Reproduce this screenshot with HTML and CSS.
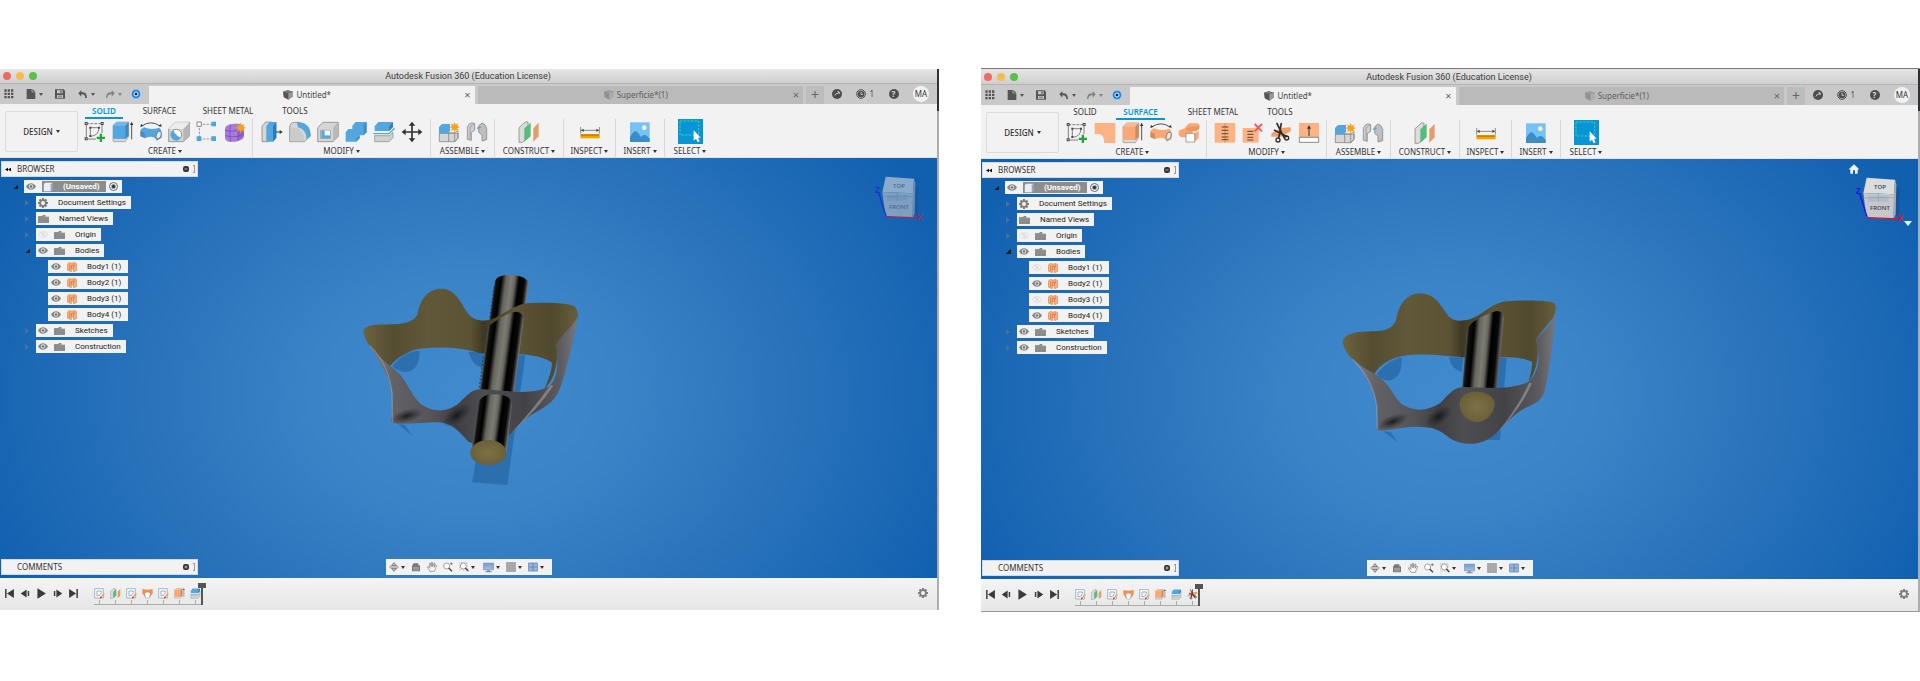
FILE: index.html
```html
<!DOCTYPE html>
<html lang="en">
<head>
<meta charset="utf-8">
<title>Autodesk Fusion 360 (Education License)</title>
<link rel="stylesheet" href="styles.css">
</head>
<body>
<svg class="defs" width="0" height="0" aria-hidden="true">
<defs>
<linearGradient id="rodA" gradientUnits="userSpaceOnUse" x1="471" x2="574" y1="0" y2="0" gradientTransform="skewX(-7.5)"><stop offset="0" stop-color="#555"/><stop offset=".06" stop-color="#111"/><stop offset=".2" stop-color="#000"/><stop offset=".34" stop-color="#66665f"/><stop offset=".5" stop-color="#7c7c74"/><stop offset=".6" stop-color="#66665f"/><stop offset=".72" stop-color="#000"/><stop offset=".88" stop-color="#080808"/><stop offset=".94" stop-color="#333"/><stop offset="1" stop-color="#777"/></linearGradient>
<linearGradient id="rodB" gradientUnits="userSpaceOnUse" x1="457" x2="562" y1="0" y2="0" gradientTransform="skewX(-5)"><stop offset="0" stop-color="#555"/><stop offset=".06" stop-color="#111"/><stop offset=".2" stop-color="#000"/><stop offset=".34" stop-color="#66665f"/><stop offset=".5" stop-color="#7c7c74"/><stop offset=".6" stop-color="#66665f"/><stop offset=".72" stop-color="#000"/><stop offset=".88" stop-color="#080808"/><stop offset="1" stop-color="#666"/></linearGradient>
<linearGradient id="olive" x1="0" x2="1" y1="0" y2="0"><stop offset="0" stop-color="#6c6340"/><stop offset=".14" stop-color="#554d31"/><stop offset=".3" stop-color="#61583a"/><stop offset=".5" stop-color="#5c5335"/><stop offset=".56" stop-color="#3f3923"/><stop offset=".7" stop-color="#5d5436"/><stop offset=".88" stop-color="#51492e"/><stop offset="1" stop-color="#665e3c"/></linearGradient>
<linearGradient id="steel" x1="0" x2="1" y1="0" y2="0"><stop offset="0" stop-color="#7f7f83"/><stop offset=".12" stop-color="#626266"/><stop offset=".3" stop-color="#555559"/><stop offset=".42" stop-color="#3f3f43"/><stop offset=".55" stop-color="#4e4e52"/><stop offset=".75" stop-color="#434347"/><stop offset=".92" stop-color="#5b5b60"/><stop offset="1" stop-color="#78787e"/></linearGradient>
<radialGradient id="cap"><stop offset="0" stop-color="#7d7145"/><stop offset="1" stop-color="#6a6039"/></radialGradient>
<radialGradient id="spot"><stop offset="0" stop-color="#111" stop-opacity=".85"/><stop offset="1" stop-color="#222" stop-opacity="0"/></radialGradient>
<linearGradient id="screen" x1="0" x2="0" y1="0" y2="1"><stop offset="0" stop-color="#6f9cd6"/><stop offset="1" stop-color="#a3c1e8"/></linearGradient>

<symbol id="sketch" viewBox="0 0 66 66"><g fill="none" stroke="#4a4a4a" stroke-width="2"><path d="M7 8H52" stroke-dasharray="9 3"/><path d="M7 12V52M54 12V36M10 54H36"/><path d="M19 20H45M19 20V46M45 20Q44 44 20 46"/></g><g fill="#4a4a4a"><path d="M2 3h9v9H2zM50 3h9v9h-9zM2 49h9v9H2zM16 17h6v6h-6zM42 17h6v6h-6zM16 42h6v6h-6z"/></g><g fill="#f2f2f2"><path d="M5 6h3v3H5zM53 6h3v3h-3zM5 52h3v3H5z"/></g><path d="M47 38h7v9h9v7h-9v9h-7v-9h-9v-7h9z" fill="#22a53f"/></symbol>
<symbol id="extrude" viewBox="0 0 66 66"><path d="M3 55V14L14 3H50V46L40 62H6Q3 62 3 58z" fill="#d9d9d9" stroke="#777" stroke-width="1.5"/><path d="M3 53V15Q3 13 5 11L13 4Q14 3 17 3H50V44L40 54z" fill="currentColor"/><path d="M40 14L50 3V45L40 54z" fill="#000" opacity=".18"/><path d="M3 14L14 3H50L40 14z" fill="#fff" opacity=".2"/><path d="M59 55V9" stroke="#333" stroke-width="2.5"/><path d="M54 12L59 2L64 12z" fill="#333"/></symbol>
<symbol id="revolve" viewBox="0 0 66 66"><path d="M5 15Q33 -4 60 15" fill="none" stroke="#333" stroke-width="2.5"/><path d="M1 18L3 9L11 14zM65 18L63 9L55 14z" fill="#333"/><path d="M1 30Q1 26 5 23L12 19Q33 28 58 20Q65 26 65 36V50L50 59Q46 47 32 47Q22 47 15 52L1 46z" fill="currentColor"/><path d="M15 52L1 46V30L14 35zM48 40L62 28Q65 31 65 38L50 59z" fill="#000" opacity=".16"/><ellipse cx="56" cy="42" rx="7" ry="12" fill="#e8e8e8" stroke="#666" stroke-width="2" transform="rotate(20 56 42)"/></symbol>
<symbol id="hole" viewBox="0 0 66 66"><path d="M2 24L22 4H64V46L46 62H2z" fill="#d5d5d5" stroke="#777" stroke-width="2"/><path d="M46 24L64 5V46L46 62z" fill="#b5b5b5"/><path d="M2 24L22 4H64L46 24z" fill="#ececec"/><circle cx="25" cy="41" r="16" fill="#fff" stroke="#666" stroke-width="2"/><path d="M16 28A16 16 0 1 0 38 50Q24 46 16 28z" fill="#54a6e0"/></symbol>
<symbol id="pattern" viewBox="0 0 66 66"><path d="M10 10H54M10 10V54H54" fill="none" stroke="#666" stroke-width="2" stroke-dasharray="7 4"/><path d="M3 3h13v13H3z" fill="#fff" stroke="#555" stroke-width="2"/><path d="M46 2h14v14H46zM2 46h14v14H2zM46 46h14v14H46z" fill="#4da3e4"/></symbol>
<symbol id="form" viewBox="0 0 66 66"><path d="M3 24Q3 15 14 11L30 8H44Q60 10 60 24V44Q60 52 50 57L36 62H14Q3 60 3 48z" fill="#a77bdc"/><path d="M3 28Q20 34 42 28Q55 24 60 20M4 44Q22 50 42 46Q56 42 60 36M20 10Q14 30 20 62M42 10V60" fill="none" stroke="#6f42ae" stroke-width="2"/><path d="M42 28Q56 25 60 20V46L42 60z" fill="#6f42ae" opacity=".35"/><path d="M50 4l3 9 9-4-4 8 8 3-8 4 4 8-9-4-3 9-3-9-9 4 4-8-8-4 8-3-4-8 9 4z" fill="#f6a31b"/></symbol>
<symbol id="presspull" viewBox="0 0 66 66"><path d="M3 15L14 3H32V52L22 62H3z" fill="#d6d6d6" stroke="#777" stroke-width="2"/><path d="M16 15L26 3H46V50L36 62H16z" fill="#54a6e0"/><path d="M36 15L46 3V50L36 62z" fill="#2b7cbb"/><path d="M44 33H58" stroke="#333" stroke-width="3"/><path d="M56 27L65 33L56 39z" fill="#333"/></symbol>
<symbol id="fillet" viewBox="0 0 66 66"><path d="M2 20Q2 4 18 4H30Q64 10 64 44V46L46 62H2z" fill="#d6d6d6" stroke="#777" stroke-width="2"/><path d="M24 4H32Q64 8 64 40V46L52 54Q54 26 26 18z" fill="#54a6e0"/><path d="M3 61V20Q42 16 46 61z" fill="#cbcbcb"/></symbol>
<symbol id="shell" viewBox="0 0 66 66"><path d="M2 20L18 4H64V46L48 62H2z" fill="#d6d6d6" stroke="#777" stroke-width="2"/><path d="M48 20L64 4V46L48 62z" fill="#b9b9b9"/><path d="M11 28H40V52H11z" fill="#fff" stroke="#777" stroke-width="2"/><path d="M13 29H23L39 43V51H13z" fill="#54a6e0"/><path d="M23 29H39V43H23z" fill="#fff"/></symbol>
<symbol id="combine" viewBox="0 0 66 66"><path d="M2 34L10 24H22V14L32 3H65V34L56 43H44V52L34 62H2z" fill="#54a6e0"/><path d="M56 12L65 3V34L56 43zM34 52L44 43V52L34 62z" fill="#2f86cb" opacity=".7"/></symbol>
<symbol id="split" viewBox="0 0 66 66"><path d="M5 16L16 3H60V18L48 30H5z" fill="#54a6e0"/><path d="M48 16L60 4V18L48 30z" fill="#2f80be"/><path d="M1 38H48L65 22" fill="none" stroke="#54a6e0" stroke-width="4"/><path d="M5 44H50L60 34V50L48 62H5z" fill="#d1d1d1" stroke="#888" stroke-width="2"/></symbol>
<symbol id="move" viewBox="0 0 66 66"><path d="M33 10V56M10 33H56" stroke="#333" stroke-width="5"/><path d="M23 14L33 2L43 14zM23 52L33 64L43 52zM14 23L2 33L14 43zM52 23L64 33L52 43z" fill="#333"/></symbol>
<symbol id="patch" viewBox="0 0 66 66"><path d="M2 3H64V63H30V55Q29 39 15 36H2z" fill="#fbb383"/></symbol>
<symbol id="offset" viewBox="0 0 66 66"><path d="M2 30Q2 24 12 22L22 18V14L34 4H58L64 8V20L54 28H44V46H10Q2 42 2 36z" fill="#f9a873"/><path d="M54 14L64 8V20L54 28zM22 22L36 14H54V28H32z" fill="#d9793a" opacity=".4"/><path d="M50 34L62 26V48L50 60z" fill="#f9a873"/><path d="M24 34H50V60H24z" fill="#fff" stroke="#777" stroke-width="2"/></symbol>
<symbol id="stitch" viewBox="0 0 66 66"><path d="M2 3H64V62H2z" fill="#fbb383"/><path d="M33 3V62" stroke="#c77b46" stroke-width="2"/><path d="M23 15H43M23 25H43M23 35H43M23 45H43M23 53H43" stroke="#5b4636" stroke-width="3"/></symbol>
<symbol id="unstitch" viewBox="0 0 66 66"><path d="M2 18H50V62H2z" fill="#fbb383"/><path d="M16 28H34M16 37H34M16 46H34M16 54H34" stroke="#5b4636" stroke-width="3"/><path d="M38 6L60 28M60 6L38 28" stroke="#f05a60" stroke-width="6"/></symbol>
<symbol id="trim" viewBox="0 0 66 66"><path d="M4 34L34 18L62 16V28L34 44H4z" fill="#f2a06a"/><path d="M20 3L44 50M34 3L26 50M12 24L52 44" stroke="#2f2f2f" stroke-width="5"/><circle cx="24" cy="54" r="6" fill="none" stroke="#2f2f2f" stroke-width="4"/><circle cx="50" cy="48" r="6" fill="none" stroke="#2f2f2f" stroke-width="4"/></symbol>
<symbol id="extend" viewBox="0 0 66 66"><path d="M3 3H63V45H3z" fill="#fbb383"/><path d="M4 46H62V61H4z" fill="#fff" stroke="#555" stroke-width="2"/><path d="M33 42V18" stroke="#333" stroke-width="3"/><path d="M27 20L33 10L39 20z" fill="#333"/></symbol>
<symbol id="component" viewBox="0 0 66 66"><path d="M4 36H60V52L50 62H4z" fill="#d5d5d5" stroke="#777" stroke-width="2"/><path d="M32 36V62M4 36H50L60 28V52L50 62V36" fill="none" stroke="#777" stroke-width="2"/><path d="M3 18L12 9H36V30L30 37H3z" fill="#54a6e0"/><path d="M50 2l3 9 9-4-4 8 8 3-8 4 4 8-9-4-3 9-3-9-9 4 4-8-8-4 8-3-4-8 9 4z" fill="#f6a31b"/></symbol>
<symbol id="joint" viewBox="0 0 66 66"><path d="M4 55V20Q6 8 18 5L26 8V28L16 34V58z" fill="#cfcfcf" stroke="#777" stroke-width="2"/><path d="M62 56V22Q58 8 48 6L38 14V34L48 42V60z" fill="#c0c0c0" stroke="#777" stroke-width="2"/><path d="M33 22L44 18" stroke="#54a6e0" stroke-width="4"/><path d="M12 56V20Q14 12 26 8" fill="none" stroke="#888" stroke-width="2"/></symbol>
<symbol id="plane" viewBox="0 0 66 66"><path d="M3 20L22 3H30V50L14 64H3z" fill="#dcdcdc" stroke="#777" stroke-width="2"/><path d="M19 22L38 5V46L19 62z" fill="#53bd7c"/><path d="M46 22L62 5V46L46 62z" fill="#e89a68"/></symbol>
<symbol id="measure" viewBox="0 0 66 66"><path d="M5 18V38M61 18V38M7 28H59" stroke="#555" stroke-width="2"/><path d="M6 28L14 23V33zM60 28L52 23V33z" fill="#444"/><path d="M4 39H62V52H4z" fill="#f5a300"/><path d="M9 40v5M15 40v5M21 40v5M27 40v5M33 40v5M39 40v5M45 40v5M51 40v5M57 40v5" stroke="#704b00" stroke-width="2"/></symbol>
<symbol id="picture" viewBox="0 0 66 66"><path d="M3 4H62V63H3z" fill="#74c2f7"/><path d="M3 48Q18 22 27 36L36 48Q48 34 62 54V63H3z" fill="#3a8dc8"/><circle cx="46" cy="20" r="7" fill="#fff3b0"/></symbol>
<symbol id="select" viewBox="0 0 75 75"><path d="M0 0H75V75H0z" fill="#0696d7"/><path d="M6 6H62V48H6z" fill="none" stroke="#6bd37a" stroke-width="2.5" stroke-dasharray="7 4"/><path d="M47 34V65L54 59L59 70L65 67L60 56H68z" fill="#fff"/></symbol>

<symbol id="grid" viewBox="0 0 30 30"><path d="M1 1h7v7H1zM11 1h7v7h-7zM21 1h7v7h-7zM1 11h7v7H1zM11 11h7v7h-7zM21 11h7v7h-7zM1 21h7v7H1zM11 21h7v7h-7zM21 21h7v7h-7z"/></symbol>
<symbol id="file" viewBox="0 0 30 30"><path d="M2 0H17V10H28V30H2zM19 0L28 8H19z"/></symbol>
<symbol id="save" viewBox="0 0 30 30"><path fill-rule="evenodd" d="M0 1H26L30 5V29H0zM6 4V13H23V4zM6 18V27H24V18zM16 5h4v6h-4zM9 20h12v2H9zM9 23h12v2H9z"/></symbol>
<symbol id="undo" viewBox="0 0 30 30"><path d="M10 3V10Q26 8 27 26L22 28Q22 15 10 16V23L1 13z"/></symbol>
<symbol id="redo" viewBox="0 0 30 30"><path d="M20 3V10Q4 8 3 26L7 28Q8 15 20 16V23L29 13z"/></symbol>
<symbol id="hub" viewBox="0 0 30 30"><path d="M8 1H22L30 15L22 29H8L0 15z" fill="#78bdf7"/><circle cx="15" cy="15" r="12" fill="#1583ea"/><circle cx="15" cy="15" r="6" fill="#123" stroke="#fff" stroke-width="3"/></symbol>
<symbol id="doc" viewBox="0 0 30 30"><path d="M0 5L14 1L30 5V19L16 29L2 22z" fill="#555"/><path d="M16 10L30 5V19L16 29z" fill="#999"/><path d="M0 5L14 1L30 5L16 10z" fill="#777"/></symbol>
<symbol id="ext" viewBox="0 0 30 30"><circle cx="15" cy="15" r="15"/><path d="M7 22Q10 10 19 12L15 7Q25 5 23 16L20 13Q12 14 7 22z" fill="#ddd"/></symbol>
<symbol id="clock" viewBox="0 0 30 30"><circle cx="15" cy="15" r="13" fill="none" stroke="currentColor" stroke-width="3"/><circle cx="15" cy="15" r="10"/><path d="M15 8V16H21" fill="none" stroke="#ddd" stroke-width="2.5"/></symbol>
<symbol id="eye" viewBox="0 0 30 20"><path d="M0 10C8 -3 22 -3 30 10C22 23 8 23 0 10z" fill="#858585"/><circle cx="15" cy="10" r="6.5" fill="#f2f2f2"/><circle cx="15" cy="10" r="4" fill="#6f6f6f"/></symbol>
<symbol id="eyeoff" viewBox="0 0 30 20"><path d="M1 10C8 -1 22 -1 29 10C22 21 8 21 1 10zM4 1L26 19" fill="none" stroke="#d2d2d2" stroke-width="2"/><circle cx="15" cy="10" r="4" fill="#dadada"/></symbol>
<symbol id="folder" viewBox="0 0 33 24"><path d="M0 3H12L15 0H22V5H33V24H0z" fill="#8c8c8c"/><path d="M0 6H33" stroke="#aaa"/></symbol>
<symbol id="gear" viewBox="0 0 30 30"><g fill="#7d7d7d"><path d="M12 0h6v30h-6z"/><path d="M12 0h6v30h-6z" transform="rotate(45 15 15)"/><path d="M12 0h6v30h-6z" transform="rotate(90 15 15)"/><path d="M12 0h6v30h-6z" transform="rotate(135 15 15)"/><circle cx="15" cy="15" r="11"/></g><circle cx="15" cy="15" r="6" fill="#f2f2f2"/></symbol>
<symbol id="cube" viewBox="0 0 30 30"><path d="M1 6L7 1H29V23L23 29H4Q1 29 1 26z" fill="#e9eef6" stroke="#666" stroke-width="1.5"/><path d="M23 7L29 1V23L23 29z" fill="#9aa3b5"/></symbol>
<symbol id="body" viewBox="0 0 30 30"><path d="M1 6L8 1L15 4L22 1L29 5V25L20 29L18 20H13V29L1 24z" fill="#fbb283" stroke="#d06a30" stroke-width="1.5"/><path d="M8 7V24M13 20V10H19V20M22 5V14" fill="none" stroke="#d06a30" stroke-width="2"/></symbol>
<symbol id="rewind" viewBox="0 0 18 10"><path d="M9 0V10L0 5zM18 0V10L9 5z"/></symbol>
<symbol id="dot" viewBox="0 0 16 16"><rect width="16" height="16" rx="6" fill="#333"/><path d="M4 8H12" stroke="#ddd" stroke-width="2"/></symbol>
<symbol id="dotplus" viewBox="0 0 16 16"><rect width="16" height="16" rx="6" fill="#333"/><path d="M4 8H12M8 4V12" stroke="#ddd" stroke-width="2"/></symbol>
<symbol id="first" viewBox="0 0 30 30"><path d="M3 3H7V27H3zM27 3V27L8 15z"/></symbol>
<symbol id="prev" viewBox="0 0 30 30"><path d="M18 4V26L2 15zM21 8H25V22H21z"/></symbol>
<symbol id="play" viewBox="0 0 30 30"><path d="M4 1L27 15L4 29z"/></symbol>
<symbol id="next" viewBox="0 0 30 30"><path d="M12 4V26L28 15zM5 8H9V22H5z"/></symbol>
<symbol id="last" viewBox="0 0 30 30"><path d="M23 3H27V27H23zM3 3V27L22 15z"/></symbol>
<symbol id="tsketch" viewBox="0 0 33 33"><path d="M2 2H28V30H2z" fill="#fafafa" stroke="#7e9cbc" stroke-width="2"/><path d="M9 9H22V14Q20 24 9 24z" fill="none" stroke="#6f8eb0" stroke-width="2"/><path d="M20 29L31 16" stroke="#f0a02c" stroke-width="4"/><path d="M19 31L22 26" stroke="#e33" stroke-width="4"/></symbol>
<symbol id="tloft" viewBox="0 0 33 33"><path d="M1 3Q16 8 32 3V16L22 30H11L1 16z" fill="#f58b4c"/><path d="M11 30L8 16Q16 8 25 16L22 30z" fill="#fff" stroke="#999" stroke-width="1.5"/></symbol>
<symbol id="orbit" viewBox="0 0 30 30"><path d="M15 1V29" stroke="#666" stroke-width="2"/><ellipse cx="15" cy="15" rx="13" ry="5" fill="none" stroke="#666" stroke-width="2"/><ellipse cx="15" cy="15" rx="6" ry="12" fill="none" stroke="#666" stroke-width="2"/></symbol>
<symbol id="look" viewBox="0 0 30 30"><path d="M3 12L8 4H22V10H27V28H3z" fill="#777"/><path d="M6 16H24M6 20H24M6 24H24" stroke="#bbb" stroke-width="2"/></symbol>
<symbol id="hand" viewBox="0 0 30 30"><path d="M9 28Q5 22 1 15L5 14L9 19L7 5L10 4L13 14V1H16L17 14L21 3L24 4L21 16L26 9L29 11Q25 20 22 28z" fill="#fff" stroke="#666" stroke-width="1.8"/></symbol>
<symbol id="zoom" viewBox="0 0 30 30"><circle cx="11" cy="12" r="9" fill="#fff" stroke="#777" stroke-width="2"/><path d="M17 18L27 28" stroke="#444" stroke-width="4"/><path d="M21 5H29M25 1V9" stroke="#555" stroke-width="2"/></symbol>
<symbol id="zoomw" viewBox="0 0 30 30"><path d="M1 1H24V24H1z" fill="none" stroke="#999" stroke-width="1.5" stroke-dasharray="3 2"/><circle cx="13" cy="12" r="9" fill="#fff" stroke="#777" stroke-width="2"/><path d="M19 18L28 27" stroke="#444" stroke-width="4"/></symbol>
<symbol id="display" viewBox="0 0 33 30"><path d="M1 2H32V22H1z" fill="url(#screen)" stroke="#7c8ba0" stroke-width="2"/><path d="M12 23H21V26H26V29H7V26H12z" fill="#888"/></symbol>
<symbol id="mesh" viewBox="0 0 30 30"><path d="M1 1H29V29H1z" fill="#9d9da4"/><path d="M1 8H29M1 15H29M1 22H29M8 1V29M15 1V29M22 1V29" stroke="#ccc" stroke-width="1"/><path d="M1 1H29V29H1z" fill="none" stroke="#888"/></symbol>
<symbol id="views" viewBox="0 0 30 30"><path d="M1 2H29V28H1z" fill="#4c6f9f"/><path d="M3 4H14V14H3zM16 4H27V14H16zM3 16H14V26H3zM16 16H27V26H16z" fill="#92b6e2"/></symbol>
<symbol id="viewcube" viewBox="0 0 150 150">
<path d="M28 42L130 50V130L115 139L34 142z" fill="#0b3d78" opacity=".3"/>
<path d="M32 20L117 26L114 70L22 66z" fill="#dadcde"/><path d="M22 66L114 70L113 145L31 139z" fill="#c6c8cb"/><path d="M117 26L121 40L119 130L113 145L114 70z" fill="#a8abb0"/>
<path d="M36 74H98V92H36z" fill="#aebccb"/><path d="M22 80H114M67 66V92" stroke="#8e969f" stroke-width="1.5"/>
<path d="M11 68L34 140" stroke="#1414e6" stroke-width="4"/><path d="M34 140L130 144" stroke="#d9152b" stroke-width="4"/>
</symbol>
</defs>
</svg>

<main class="screens">
<section class="window" aria-label="Solid workspace">
  <header class="titlebar"><span class="lights"><i class="red"></i><i class="amber"></i><i class="green"></i></span><h1>Autodesk Fusion 360 (Education License)</h1></header>
  <div class="tabbar">
    <div class="quick">
      <button aria-label="Data panel"><svg class="i10"><use href="#grid"/></svg></button>
      <button class="caret" aria-label="File"><svg class="i10"><use href="#file"/></svg></button>
      <button aria-label="Save"><svg class="i10"><use href="#save"/></svg></button>
      <button class="caret" aria-label="Undo"><svg class="i10"><use href="#undo"/></svg></button>
      <button class="caret dim" aria-label="Redo"><svg class="i10"><use href="#redo"/></svg></button>
      <button aria-label="Hub"><svg class="i10"><use href="#hub"/></svg></button>
    </div>
    <div class="doctab active"><button class="docname"><svg class="i10"><use href="#doc"/></svg>Untitled*</button><button class="close" aria-label="Close">×</button></div>
    <div class="doctab"><button class="docname"><svg class="i10"><use href="#doc"/></svg>Superficie*(1)</button><button class="close" aria-label="Close">×</button></div>
    <button class="add" aria-label="New design">+</button>
    <div class="account">
      <button aria-label="Extensions"><svg class="i10"><use href="#ext"/></svg></button>
      <button aria-label="Jobs"><svg class="i10"><use href="#clock"/></svg>1</button>
      <button class="help" aria-label="Help">?</button>
      <button class="avatar">MA</button>
    </div>
  </div>
  <div class="ribbon">
    <button class="design caret">DESIGN</button>
    <div class="tools">
      <nav class="modes"><button class="on">SOLID</button><button class="surface">SURFACE</button><button class="sheet">SHEET METAL</button><button class="more">TOOLS</button></nav>
      <div class="groups">
        <div class="group g-create6"><div class="icons blue"><button aria-label="Create sketch"><svg><use href="#sketch"/></svg></button><button aria-label="Extrude"><svg><use href="#extrude"/></svg></button><button aria-label="Revolve"><svg><use href="#revolve"/></svg></button><button aria-label="Hole"><svg><use href="#hole"/></svg></button><button aria-label="Pattern"><svg><use href="#pattern"/></svg></button><button aria-label="Create form"><svg><use href="#form"/></svg></button></div><button class="menu caret">CREATE</button></div>
        <div class="group g-modify6"><div class="icons"><button aria-label="Press pull"><svg><use href="#presspull"/></svg></button><button aria-label="Fillet"><svg><use href="#fillet"/></svg></button><button aria-label="Shell"><svg><use href="#shell"/></svg></button><button aria-label="Combine"><svg><use href="#combine"/></svg></button><button aria-label="Split body"><svg><use href="#split"/></svg></button><button aria-label="Move"><svg><use href="#move"/></svg></button></div><button class="menu caret">MODIFY</button></div>
        <div class="group g-assemble"><div class="icons"><button aria-label="New component"><svg><use href="#component"/></svg></button><button aria-label="Joint"><svg><use href="#joint"/></svg></button></div><button class="menu caret">ASSEMBLE</button></div>
        <div class="group g-construct"><div class="icons"><button aria-label="Offset plane"><svg><use href="#plane"/></svg></button></div><button class="menu caret">CONSTRUCT</button></div>
        <div class="group g-inspect"><div class="icons"><button aria-label="Measure"><svg><use href="#measure"/></svg></button></div><button class="menu caret">INSPECT</button></div>
        <div class="group g-insert"><div class="icons"><button aria-label="Insert image"><svg><use href="#picture"/></svg></button></div><button class="menu caret">INSERT</button></div>
        <div class="group g-select"><div class="icons"><button aria-label="Select tool"><svg class="big"><use href="#select"/></svg></button></div><button class="menu caret">SELECT</button></div>
      </div>
    </div>
  </div>
  <div class="canvas">
    <svg class="model" viewBox="0 0 780 720" role="img" aria-label="Ring surface crossed by a rod">
      <g fill="#2c6fae"><path d="M158 318Q190 275 238 272Q240 330 200 336Q175 336 158 318zM385 275H440L430 325Q395 315 385 275zM530 286H556L502 675L397 667L420 520H500zM175 493L215 526L195 495z"/></g>
      <path d="M465 62Q472 44 515 45Q562 48 566 72L550 190L445 210z" fill="url(#rodA)"/>
      <path d="M70 215C75 190 120 195 160 193C205 190 220 182 232 165C240 115 265 86 305 86C350 88 362 130 385 162C400 180 420 184 450 180C490 165 520 135 560 130C610 126 690 128 705 140C720 160 712 180 705 195L655 250C652 330 640 360 612 388C630 350 635 330 636 308C620 295 580 285 545 283L420 280C370 262 290 258 230 268C190 280 165 300 150 318C110 285 75 250 70 215z" fill="url(#olive)"/>
      <path d="M445 198C475 180 505 155 530 155Q553 160 550 185L522 400H418z" fill="url(#rodA)"/>
      <path d="M462 80L449 180M430 290L418 385" stroke="#182a3c" stroke-width="4" stroke-dasharray="6 5" opacity=".6"/>
      <path d="M85 252C105 280 130 305 150 318C200 350 205 395 240 430C280 460 320 455 350 435C380 410 390 390 420 387L525 395C570 398 610 392 632 375C655 350 655 300 648 255C660 225 695 205 712 172C705 230 680 330 660 385C640 440 590 450 560 475C530 500 520 520 480 545C450 560 410 555 385 545C350 505 330 485 280 487C230 490 180 495 155 488L158 400C150 350 110 290 85 252z" fill="url(#steel)"/>
      <ellipse cx="200" cy="468" rx="52" ry="20" fill="url(#spot)" transform="rotate(-15 200 468)"/><ellipse cx="350" cy="466" rx="52" ry="24" fill="url(#spot)" transform="rotate(-35 350 466)"/>
      <path d="M512 520Q570 460 632 375L640 377Q592 450 512 520z" fill="#aaa8ac" opacity=".55"/>
      <path d="M90 258Q145 310 156 400L158 488" fill="none" stroke="#aaa8ac" stroke-width="4" opacity=".45"/>
      <path d="M415 425Q430 400 470 403Q510 405 516 428L500 575H394z" fill="url(#rodA)"/>
      <ellipse cx="445" cy="578" rx="54" ry="38" fill="url(#cap)"/>
    </svg>
    <div class="cube faded"><svg><use href="#viewcube"/></svg><span class="face top">TOP</span><span class="face front">FRONT</span><span class="axis z">Z</span><span class="axis x">X</span></div>
    <aside class="browser">
      <div class="panel"><button aria-label="Collapse"><svg class="rew"><use href="#rewind"/></svg></button><h2>BROWSER</h2><button aria-label="Hide"><svg class="pin"><use href="#dot"/></svg></button><i class="grip"></i></div>
      <ul class="tree">
        <li class="root"><button class="tw open" aria-label="Toggle"></button><div class="row"><svg class="eye"><use href="#eye"/></svg><span class="name"><svg class="i10"><use href="#cube"/></svg>(Unsaved)</span><input type="radio" name="active-left" aria-label="Activate" checked></div></li>
        <li><button class="tw" aria-label="Toggle"></button><div class="row"><svg class="i10"><use href="#gear"/></svg>Document Settings</div></li>
        <li><button class="tw" aria-label="Toggle"></button><div class="row"><svg class="fold"><use href="#folder"/></svg>Named Views</div></li>
        <li><button class="tw" aria-label="Toggle"></button><div class="row"><svg class="eye"><use href="#eyeoff"/></svg><svg class="fold"><use href="#folder"/></svg>Origin</div></li>
        <li><button class="tw open" aria-label="Toggle"></button><div class="row"><svg class="eye"><use href="#eye"/></svg><svg class="fold"><use href="#folder"/></svg>Bodies</div></li>
        <li class="leaf"><div class="row"><svg class="eye"><use href="#eye"/></svg><svg class="i10"><use href="#body"/></svg>Body1 (1)</div></li>
        <li class="leaf"><div class="row"><svg class="eye"><use href="#eye"/></svg><svg class="i10"><use href="#body"/></svg>Body2 (1)</div></li>
        <li class="leaf"><div class="row"><svg class="eye"><use href="#eye"/></svg><svg class="i10"><use href="#body"/></svg>Body3 (1)</div></li>
        <li class="leaf"><div class="row"><svg class="eye"><use href="#eye"/></svg><svg class="i10"><use href="#body"/></svg>Body4 (1)</div></li>
        <li><button class="tw" aria-label="Toggle"></button><div class="row"><svg class="eye"><use href="#eye"/></svg><svg class="fold"><use href="#folder"/></svg>Sketches</div></li>
        <li><button class="tw" aria-label="Toggle"></button><div class="row"><svg class="eye"><use href="#eye"/></svg><svg class="fold"><use href="#folder"/></svg>Construction</div></li>
      </ul>
    </aside>
    <div class="dock">
      <div class="panel comments"><h2>COMMENTS</h2><button aria-label="Show"><svg class="pin"><use href="#dotplus"/></svg></button><i class="grip"></i></div>
      <div class="navbar"><button class="caret" aria-label="Orbit"><svg class="i10"><use href="#orbit"/></svg></button><button aria-label="Look at"><svg class="i10"><use href="#look"/></svg></button><button aria-label="Pan"><svg class="i10"><use href="#hand"/></svg></button><button aria-label="Zoom"><svg class="i10"><use href="#zoom"/></svg></button><button class="caret fit" aria-label="Fit"><svg class="i10"><use href="#zoomw"/></svg></button><button class="caret" aria-label="Display"><svg class="i11"><use href="#display"/></svg></button><button class="caret" aria-label="Grid"><svg class="i10"><use href="#mesh"/></svg></button><button class="caret" aria-label="Viewports"><svg class="i10"><use href="#views"/></svg></button></div>
    </div>
  </div>
  <footer class="timeline">
    <div class="player"><button aria-label="First"><svg class="i11"><use href="#first"/></svg></button><button aria-label="Previous"><svg class="i11"><use href="#prev"/></svg></button><button aria-label="Play"><svg class="i11"><use href="#play"/></svg></button><button aria-label="Next"><svg class="i11"><use href="#next"/></svg></button><button aria-label="Last"><svg class="i11"><use href="#last"/></svg></button></div>
    <ol class="steps"><li><svg class="i11"><use href="#tsketch"/></svg></li><li><svg class="i11"><use href="#plane"/></svg></li><li><svg class="i11"><use href="#tsketch"/></svg></li><li><svg class="i11"><use href="#tloft"/></svg></li><li><svg class="i11"><use href="#tsketch"/></svg></li><li class="orange"><svg class="i11"><use href="#extrude"/></svg></li><li><svg class="i11"><use href="#split"/></svg></li></ol>
    <i class="marker"></i>
    <button class="settings" aria-label="Settings"><svg class="i10"><use href="#gear"/></svg></button>
  </footer>
</section>

<section class="window second" aria-label="Surface workspace">
  <header class="titlebar"><span class="lights"><i class="red"></i><i class="amber"></i><i class="green"></i></span><h1>Autodesk Fusion 360 (Education License)</h1></header>
  <div class="tabbar">
    <div class="quick">
      <button aria-label="Data panel"><svg class="i10"><use href="#grid"/></svg></button>
      <button class="caret" aria-label="File"><svg class="i10"><use href="#file"/></svg></button>
      <button aria-label="Save"><svg class="i10"><use href="#save"/></svg></button>
      <button class="caret" aria-label="Undo"><svg class="i10"><use href="#undo"/></svg></button>
      <button class="caret dim" aria-label="Redo"><svg class="i10"><use href="#redo"/></svg></button>
      <button aria-label="Hub"><svg class="i10"><use href="#hub"/></svg></button>
    </div>
    <div class="doctab active"><button class="docname"><svg class="i10"><use href="#doc"/></svg>Untitled*</button><button class="close" aria-label="Close">×</button></div>
    <div class="doctab"><button class="docname"><svg class="i10"><use href="#doc"/></svg>Superficie*(1)</button><button class="close" aria-label="Close">×</button></div>
    <button class="add" aria-label="New design">+</button>
    <div class="account">
      <button aria-label="Extensions"><svg class="i10"><use href="#ext"/></svg></button>
      <button aria-label="Jobs"><svg class="i10"><use href="#clock"/></svg>1</button>
      <button class="help" aria-label="Help">?</button>
      <button class="avatar">MA</button>
    </div>
  </div>
  <div class="ribbon">
    <button class="design caret">DESIGN</button>
    <div class="tools">
      <nav class="modes"><button>SOLID</button><button class="surface on">SURFACE</button><button class="sheet">SHEET METAL</button><button class="more">TOOLS</button></nav>
      <div class="groups">
        <div class="group g-create5"><div class="icons orange"><button aria-label="Create sketch"><svg><use href="#sketch"/></svg></button><button aria-label="Patch"><svg><use href="#patch"/></svg></button><button aria-label="Extrude"><svg><use href="#extrude"/></svg></button><button aria-label="Revolve"><svg><use href="#revolve"/></svg></button><button aria-label="Offset"><svg><use href="#offset"/></svg></button></div><button class="menu caret">CREATE</button></div>
        <div class="group g-modify4"><div class="icons"><button aria-label="Stitch"><svg><use href="#stitch"/></svg></button><button aria-label="Unstitch"><svg><use href="#unstitch"/></svg></button><button aria-label="Trim"><svg><use href="#trim"/></svg></button><button aria-label="Extend"><svg><use href="#extend"/></svg></button></div><button class="menu caret">MODIFY</button></div>
        <div class="group g-assemble"><div class="icons"><button aria-label="New component"><svg><use href="#component"/></svg></button><button aria-label="Joint"><svg><use href="#joint"/></svg></button></div><button class="menu caret">ASSEMBLE</button></div>
        <div class="group g-construct"><div class="icons"><button aria-label="Offset plane"><svg><use href="#plane"/></svg></button></div><button class="menu caret">CONSTRUCT</button></div>
        <div class="group g-inspect"><div class="icons"><button aria-label="Measure"><svg><use href="#measure"/></svg></button></div><button class="menu caret">INSPECT</button></div>
        <div class="group g-insert"><div class="icons"><button aria-label="Insert image"><svg><use href="#picture"/></svg></button></div><button class="menu caret">INSERT</button></div>
        <div class="group g-select"><div class="icons"><button aria-label="Select tool"><svg class="big"><use href="#select"/></svg></button></div><button class="menu caret">SELECT</button></div>
      </div>
    </div>
  </div>
  <div class="canvas">
    <svg class="model trimmed" viewBox="0 0 780 600" role="img" aria-label="Ring surface with a trimmed rod">
      <g fill="#2c6fae"><path d="M170 312Q205 270 244 262Q250 325 205 332Q180 328 170 312zM387 262H430L425 305Q395 300 387 262zM535 264H560L540 510H500L520 360zM190 484L232 516L212 486z"/></g>
      <path d="M68 215C72 190 110 185 160 184C205 183 218 170 228 152C235 105 260 70 302 70C345 72 362 105 385 138C400 153 415 156 450 148C490 135 510 100 560 94C610 90 690 90 703 100C712 115 706 125 700 142L650 205C660 270 645 310 625 336C634 310 636 290 637 276C610 262 570 262 545 262H430C380 258 310 250 260 256C210 262 180 285 163 311C110 285 72 250 68 215z" fill="url(#olive)"/>
      <path d="M440 190Q442 165 465 152Q505 128 530 123Q550 124 552 145L530 358H426z" fill="url(#rodB)"/>
      <path d="M96 264C120 290 150 305 165 312C215 345 215 375 245 402C280 425 320 425 360 400C385 375 400 352 430 351L530 354C570 352 600 346 625 336C655 310 665 260 646 212C665 185 690 175 707 128C700 210 690 290 675 360C665 390 650 400 620 412C570 435 550 475 515 500C485 525 430 530 390 505C360 480 340 470 290 470C240 470 200 485 172 480V410C165 360 130 300 96 264z" fill="url(#steel)"/>
      <ellipse cx="218" cy="455" rx="50" ry="20" fill="url(#spot)" transform="rotate(-20 218 455)"/><ellipse cx="355" cy="440" rx="48" ry="24" fill="url(#spot)" transform="rotate(-35 355 440)"/>
      <path d="M530 490Q590 420 628 338L636 340Q600 420 530 490z" fill="#aaa8ac" opacity=".55"/>
      <path d="M98 268Q160 330 170 410L172 478" fill="none" stroke="#aaa8ac" stroke-width="4" opacity=".45"/>
      <path d="M418 402C422 370 450 364 475 365C510 368 524 388 525 402C520 435 495 457 470 457C440 455 420 430 418 402z" fill="url(#cap)"/>
    </svg>
    <svg class="home" viewBox="0 0 30 30" role="img" aria-label="Home"><path d="M15 1L30 15L27 17L26 16V29H18V19H12V29H4V16L2 17L0 15z" fill="#e8f7fb"/></svg>
    <div class="cube"><svg><use href="#viewcube"/></svg><span class="face top">TOP</span><span class="face front">FRONT</span><span class="axis z">Z</span><span class="axis x">X</span><i class="drop"></i></div>
    <aside class="browser">
      <div class="panel"><button aria-label="Collapse"><svg class="rew"><use href="#rewind"/></svg></button><h2>BROWSER</h2><button aria-label="Hide"><svg class="pin"><use href="#dot"/></svg></button><i class="grip"></i></div>
      <ul class="tree">
        <li class="root"><button class="tw open" aria-label="Toggle"></button><div class="row"><svg class="eye"><use href="#eye"/></svg><span class="name"><svg class="i10"><use href="#cube"/></svg>(Unsaved)</span><input type="radio" name="active-right" aria-label="Activate" checked></div></li>
        <li><button class="tw" aria-label="Toggle"></button><div class="row"><svg class="i10"><use href="#gear"/></svg>Document Settings</div></li>
        <li><button class="tw" aria-label="Toggle"></button><div class="row"><svg class="fold"><use href="#folder"/></svg>Named Views</div></li>
        <li><button class="tw" aria-label="Toggle"></button><div class="row"><svg class="eye"><use href="#eyeoff"/></svg><svg class="fold"><use href="#folder"/></svg>Origin</div></li>
        <li><button class="tw open" aria-label="Toggle"></button><div class="row"><svg class="eye"><use href="#eye"/></svg><svg class="fold"><use href="#folder"/></svg>Bodies</div></li>
        <li class="leaf"><div class="row"><svg class="eye"><use href="#eyeoff"/></svg><svg class="i10"><use href="#body"/></svg>Body1 (1)</div></li>
        <li class="leaf"><div class="row"><svg class="eye"><use href="#eye"/></svg><svg class="i10"><use href="#body"/></svg>Body2 (1)</div></li>
        <li class="leaf"><div class="row"><svg class="eye"><use href="#eyeoff"/></svg><svg class="i10"><use href="#body"/></svg>Body3 (1)</div></li>
        <li class="leaf"><div class="row"><svg class="eye"><use href="#eye"/></svg><svg class="i10"><use href="#body"/></svg>Body4 (1)</div></li>
        <li><button class="tw" aria-label="Toggle"></button><div class="row"><svg class="eye"><use href="#eye"/></svg><svg class="fold"><use href="#folder"/></svg>Sketches</div></li>
        <li><button class="tw" aria-label="Toggle"></button><div class="row"><svg class="eye"><use href="#eye"/></svg><svg class="fold"><use href="#folder"/></svg>Construction</div></li>
      </ul>
    </aside>
    <div class="dock">
      <div class="panel comments"><h2>COMMENTS</h2><button aria-label="Show"><svg class="pin"><use href="#dotplus"/></svg></button><i class="grip"></i></div>
      <div class="navbar"><button class="caret" aria-label="Orbit"><svg class="i10"><use href="#orbit"/></svg></button><button aria-label="Look at"><svg class="i10"><use href="#look"/></svg></button><button aria-label="Pan"><svg class="i10"><use href="#hand"/></svg></button><button aria-label="Zoom"><svg class="i10"><use href="#zoom"/></svg></button><button class="caret fit" aria-label="Fit"><svg class="i10"><use href="#zoomw"/></svg></button><button class="caret" aria-label="Display"><svg class="i11"><use href="#display"/></svg></button><button class="caret" aria-label="Grid"><svg class="i10"><use href="#mesh"/></svg></button><button class="caret" aria-label="Viewports"><svg class="i10"><use href="#views"/></svg></button></div>
    </div>
  </div>
  <footer class="timeline">
    <div class="player"><button aria-label="First"><svg class="i11"><use href="#first"/></svg></button><button aria-label="Previous"><svg class="i11"><use href="#prev"/></svg></button><button aria-label="Play"><svg class="i11"><use href="#play"/></svg></button><button aria-label="Next"><svg class="i11"><use href="#next"/></svg></button><button aria-label="Last"><svg class="i11"><use href="#last"/></svg></button></div>
    <ol class="steps"><li><svg class="i11"><use href="#tsketch"/></svg></li><li><svg class="i11"><use href="#plane"/></svg></li><li><svg class="i11"><use href="#tsketch"/></svg></li><li><svg class="i11"><use href="#tloft"/></svg></li><li><svg class="i11"><use href="#tsketch"/></svg></li><li class="orange"><svg class="i11"><use href="#extrude"/></svg></li><li><svg class="i11"><use href="#split"/></svg></li><li><svg class="i11"><use href="#trim"/></svg></li></ol>
    <i class="marker"></i>
    <button class="settings" aria-label="Settings"><svg class="i10"><use href="#gear"/></svg></button>
  </footer>
</section>
</main>
</body>
</html>
```
FILE: styles.css
```css
* { box-sizing: border-box; }
body { margin: 0; background: #fff; color: #333; font: 8px/10px "Noto Sans", "Open Sans", sans-serif; }
button { margin: 0; padding: 0; border: 0; background: none; color: inherit; font: inherit; display: flex; align-items: center; justify-content: center; flex: none; }
h1, h2, ul, ol { margin: 0; padding: 0; list-style: none; font-weight: 400; }
svg { display: block; flex: none; }
.defs { position: absolute; }
.i10 { width: 10px; height: 10px; fill: currentColor; }
.i11 { width: 11px; height: 11px; fill: currentColor; }
.blue { color: #54a6e0; }
.orange { color: #f9a873; }
.caret { gap: 3px; }
.caret::after { content: ""; border: 2px solid transparent; border-top: 3px solid #333; border-bottom: 0; }

.screens { display: flex; gap: 42px; min-height: 100vh; padding: 69px 0 71px; }
.window { position: relative; flex: 1; min-width: 0; display: flex; flex-direction: column; border-right: 2px solid #aaaeb3; background: #f2f2f2; }
.window::after { content: ""; position: absolute; top: 0; right: -2px; width: 2px; height: 42px; background: #2e3236; }
.second { margin: -1px 0 -2px; border-top: 1px solid #777; border-bottom: 1px solid #999; }

.titlebar { display: grid; grid-template-columns: 1fr auto 1fr; align-items: center; height: 15px; padding: 0 4px 0 3px; background: linear-gradient(#e6e6e6, #cfcfcf); border-bottom: 1px solid #b4b4b4; }
.second .titlebar { height: 16px; }
.titlebar h1 { font: 9px/12px Roboto, "Liberation Sans", sans-serif; color: #3c3c3c; }
.lights { display: flex; gap: 5px; }
.lights i { width: 8px; height: 8px; border-radius: 50%; }
.red { background: #ee6a5f; }
.amber { background: #f5bd4f; }
.green { background: #5ac04a; }

.tabbar { display: flex; height: 20px; background: #c9c9c9; color: #555; }
.quick { display: flex; align-items: center; width: 149px; padding-left: 4px; }
.quick button { width: 19px; justify-content: flex-start; margin-right: 3px; }
.quick button:nth-child(2) { width: 26px; }
.quick button:nth-child(3) { width: 20px; }
.quick button:nth-child(4) { width: 24px; }
.quick button:nth-child(5) { width: 23px; }
.quick .caret::after { border-top-color: #555; }
.dim { opacity: .6; }
.doctab { flex: 1; display: flex; align-items: center; margin: 2px 3px 0 0; background: #bababa; color: #606060; padding-right: 3px; }
.doctab.active { background: #f2f2f2; color: #444; }
.docname { flex: 1; gap: 3px; padding-left: 2px; }
.doctab:not(.active) svg { opacity: .4; }
.close { font-size: 11px; color: #666; width: 8px; }
.add { width: 18px; margin-top: 2px; background: #bdbdbd; font-size: 14px; color: #666; }
.account { display: flex; align-items: center; justify-content: space-between; width: 113px; padding: 0 8px; color: #4d4d4d; }
.account button { gap: 3px; }
.account .help { width: 10px; height: 10px; border-radius: 50%; background: #4d4d4d; color: #ddd; font-weight: 700; }
.account .avatar { width: 16px; height: 16px; border-radius: 50%; background: #f2f2f2; color: #333; }

.ribbon { display: flex; height: 54px; background: #f2f2f2; border-bottom: 1px solid #e2e2e2; overflow: hidden; }
.design { width: 73px; height: 41px; margin: 7px 0 0 5px; border: 1px solid #dcdcdc; border-radius: 2px; font-weight: 500; }
.modes { display: flex; height: 15px; margin-left: 7px; }
.modes button { width: 38px; height: 15px; border-bottom: 2px solid transparent; }
.modes .surface { width: 49px; margin-left: 12px; }
.modes .sheet { width: 62px; margin-left: 13px; }
.modes .more { width: 36px; margin-left: 18px; }
.second .modes .sheet { margin-left: 17px; }
.modes .on { color: #0696d7; border-bottom-color: #0696d7; font-weight: 600; }
.groups { display: flex; }
.group { display: flex; flex-direction: column; align-items: center; height: 39px; border-right: 1px solid #d8d8d8; }
.group:last-child { border: 0; }
.icons { display: flex; gap: 6px; height: 25px; align-items: center; }
.icons svg { width: 22px; height: 22px; }
.icons .big { width: 25px; height: 25px; }
.menu { height: 14px; gap: 2px; }
.g-create6 { width: 175px; }
.g-modify6 { width: 178px; }
.g-create5 { width: 148px; }
.g-modify4 { width: 120px; }
.g-assemble { width: 64px; }
.g-construct { width: 69px; }
.g-inspect { width: 52px; }
.g-insert { width: 49px; }
.g-select { width: 50px; }

.canvas { position: relative; flex: 1; display: flex; flex-direction: column; justify-content: space-between; padding: 3px 1px; overflow: hidden; background: radial-gradient(ellipse 56% 95% at 50% 56%, #408acd 0, #3a83c7 30%, #2a73bb 62%, #1160b0 100%); }
.model { position: absolute; left: 340px; top: 102px; width: 260px; height: 240px; }
.model.trimmed { left: 339px; top: 111px; height: 200px; }
.browser { position: relative; }
.panel { display: flex; align-items: center; width: 197px; height: 16px; padding: 0 2px 0 3px; background: #f2f2f2; border: 1px solid #d3d9e0; }
.panel h2 { flex: 1; font: inherit; margin-left: 6px; }
.comments h2 { margin-left: 12px; }
.rew { width: 6px; height: 5px; }
.pin { width: 6px; height: 6px; }
.grip { width: 2px; height: 8px; margin-left: 4px; border: 1px solid #999; border-left: 0; }
.tree { display: flex; flex-direction: column; gap: 3px; margin-top: 3px; font-family: Roboto, "Open Sans", sans-serif; color: #222; }
.tree li { display: flex; align-items: center; gap: 6px; padding-left: 24px; }
.tree .root { padding-left: 12px; gap: 6px; }
.tree .leaf { padding-left: 47px; }
.tw { width: 5px; height: 6px; border: solid transparent; border-width: 3px 0 3px 4px; border-left-color: #4d7196; }
.tw.open { border: 0; background: linear-gradient(135deg, transparent 50%, #222 50%); height: 5px; }
.row { display: flex; align-items: center; gap: 10px; height: 13px; padding: 0 5px 0 2px; background: #f2f2f2; }
.row .eye { width: 10px; height: 7px; margin-right: -4px; }
.fold { width: 11px; height: 8px; }
.name { display: flex; align-items: center; gap: 10px; height: 11px; padding: 0 6px 0 1px; background: #8d8d8d; color: #fff; font-weight: 700; }
.row input { width: 9px; height: 9px; margin: 0 0 0 -7px; appearance: none; border: 1px solid #667; border-radius: 50%; background: radial-gradient(#234 0 1px, #fff 3px); }
.root .row { padding-right: 4px; }
.leaf .row { padding-left: 3px; padding-right: 7px; }

.dock { position: relative; display: grid; grid-template-columns: 1fr auto 1fr; align-items: center; }
.navbar { display: flex; align-items: center; gap: 6px; height: 16px; padding: 0 8px 0 3px; background: #f2f2f2; }
.navbar .caret { gap: 2px; }
.navbar .fit { margin-right: 2px; }
.cube { position: absolute; right: 12px; top: 12px; width: 50px; height: 50px; }
.cube svg { width: 50px; height: 50px; }
.faded { opacity: .6; }
.face { position: absolute; left: 8px; width: 32px; text-align: center; font: 600 6px/8px "Open Sans", sans-serif; color: #3d4450; }
.face.top { top: 12px; }
.face.front { top: 33px; }
.faded .face { color: #66707e; }
.axis { position: absolute; font: 700 8px/8px "Open Sans", sans-serif; }
.axis.z { left: 0; top: 16px; color: #1414e6; }
.axis.x { left: 42px; top: 43px; color: #d9152b; }
.drop { position: absolute; right: -6px; bottom: -5px; border: 4px solid transparent; border-top: 5px solid #e8f7fb; border-bottom: 0; }
.home { position: absolute; right: 59px; top: 5px; width: 10px; height: 10px; }

.timeline { display: flex; align-items: flex-start; height: 32px; padding: 10px 9px 0 4px; background: linear-gradient(#f4f4f4, #e6e6e6); color: #3a3a3a; }
.timeline .orange { color: #f9a873; }
.player { display: flex; gap: 5px; width: 90px; }
.steps { display: flex; border-bottom: 1px solid #aaa; }
.steps li { width: 16px; height: 16px; padding-bottom: 5px; background: linear-gradient(#aaa, #aaa) 5px 100% / 1px 4px no-repeat; }
.steps li:last-child { width: 12px; }
.marker { width: 8px; height: 22px; margin: -5px 0 0 -4px; background: linear-gradient(#555, #555) 50% 0 / 2px 100% no-repeat, linear-gradient(#555, #555) 0 0 / 8px 5px no-repeat; }
.settings { margin-left: auto; }
```
